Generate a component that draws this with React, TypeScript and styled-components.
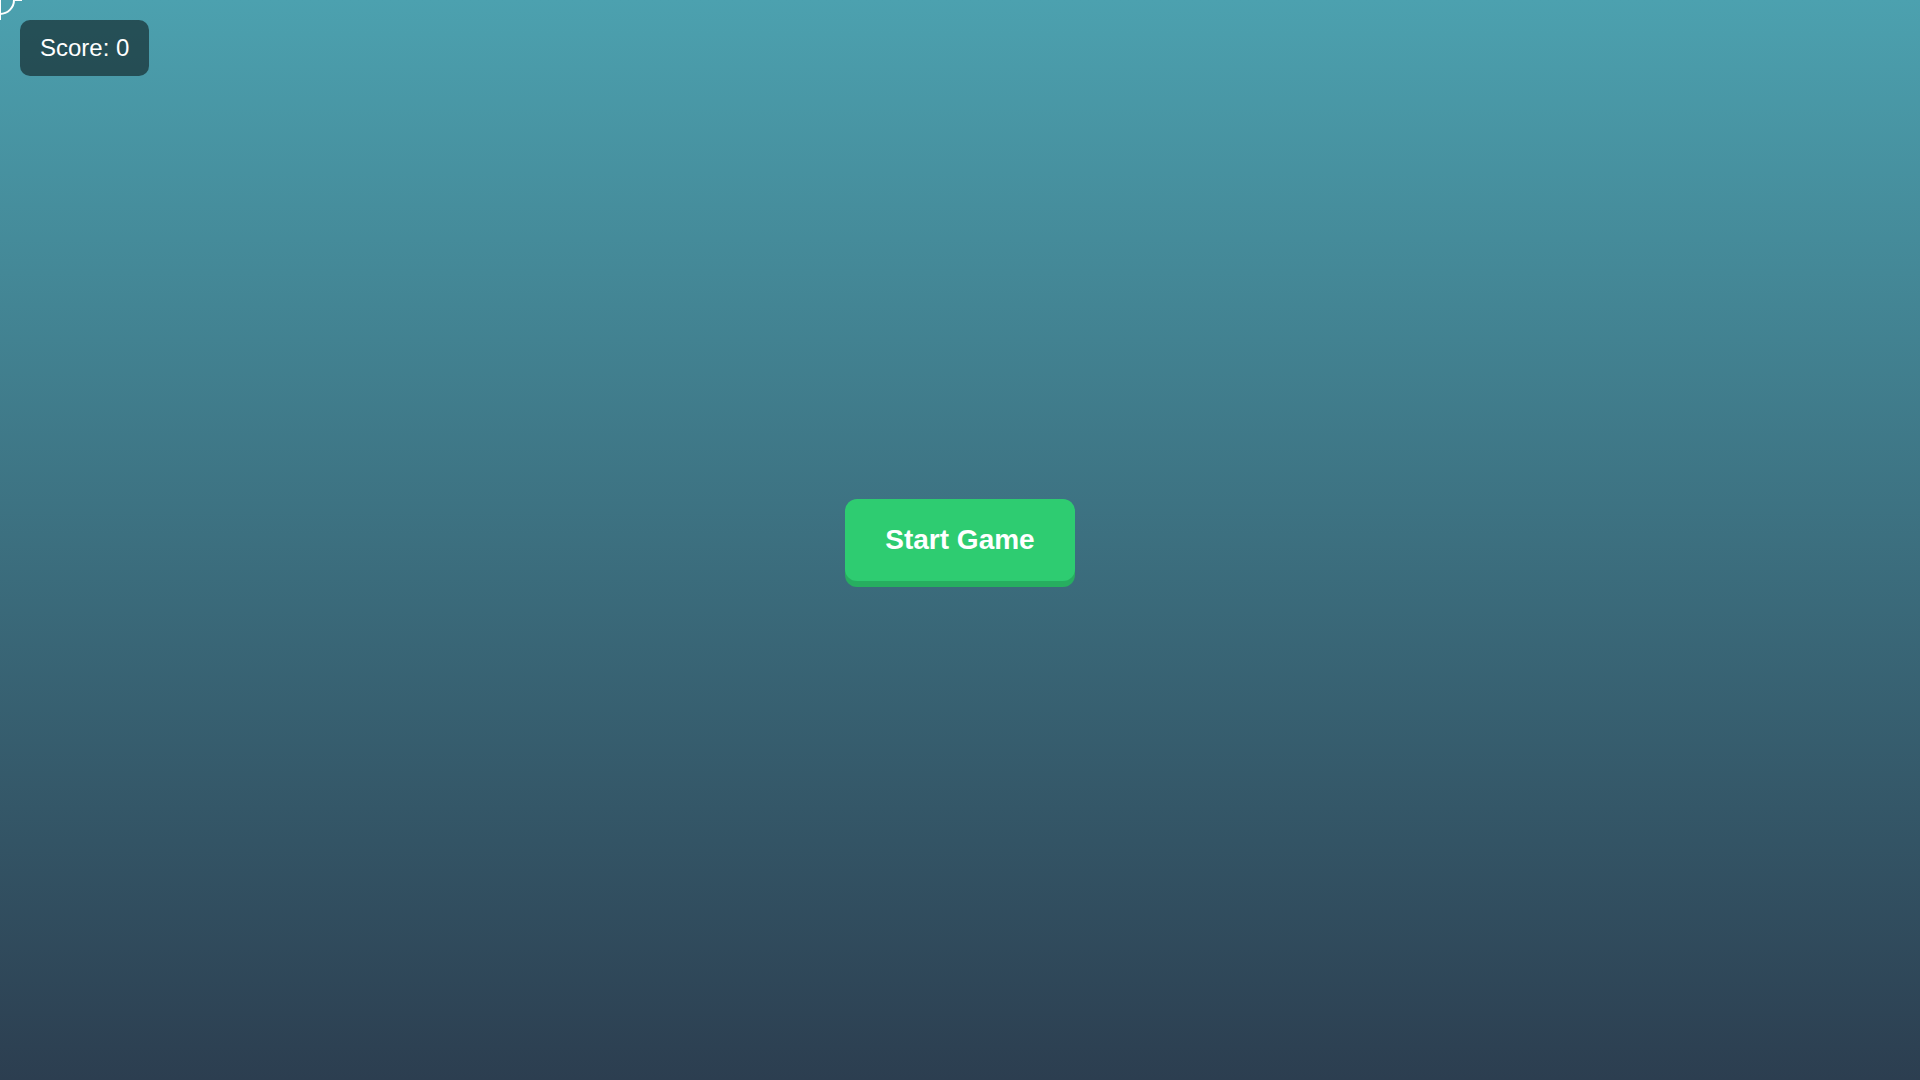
import React from "react";
import styled, { createGlobalStyle } from "styled-components";

const GlobalStyle = createGlobalStyle`
  html, body {
    margin: 0;
    padding: 0;
    height: 100%;
  }
  body {
    font-family: "Liberation Sans", Arial, sans-serif;
    overflow: hidden;
  }
  #root {
    height: 100%;
  }
`;

const GameArea = styled.div`
  position: relative;
  width: 100vw;
  height: 100vh;
  background: linear-gradient(to bottom, #4ca1af, #2c3e50);
  display: flex;
  align-items: center;
  justify-content: center;
  overflow: hidden;
`;

const Player = styled.svg`
  position: absolute;
  top: 0;
  left: 0;
`;

const ScoreBoard = styled.div`
  position: absolute;
  top: 20px;
  left: 20px;
  padding: 14px 20px;
  background: rgba(0, 0, 0, 0.5);
  color: #fff;
  font-size: 24px;
  line-height: 28px;
  border-radius: 10px;
`;

const StartButton = styled.button`
  font-family: "Liberation Sans", Arial, sans-serif;
  font-size: 28px;
  font-weight: bold;
  line-height: 32px;
  color: #fff;
  background: #2ecc71;
  border: none;
  border-radius: 12px;
  padding: 25px 40px;
  box-shadow: 0 6px 0 #27ae60;
  cursor: pointer;

  &:hover {
    background: #34d679;
  }
`;

const App = () => {
  return (
    <>
      <GlobalStyle />
      <GameArea>
        <Player width="30" height="24" viewBox="0 0 30 24">
          <circle cx="0" cy="0" r="14" fill="none" stroke="#fff" strokeWidth="2" />
          <line x1="0.5" y1="0" x2="0.5" y2="20" stroke="#fff" strokeWidth="1" />
          <line x1="15" y1="0.5" x2="22" y2="0.5" stroke="#fff" strokeWidth="1" />
        </Player>
        <ScoreBoard>Score: 0</ScoreBoard>
        <StartButton>Start Game</StartButton>
      </GameArea>
    </>
  );
};

export default App;
